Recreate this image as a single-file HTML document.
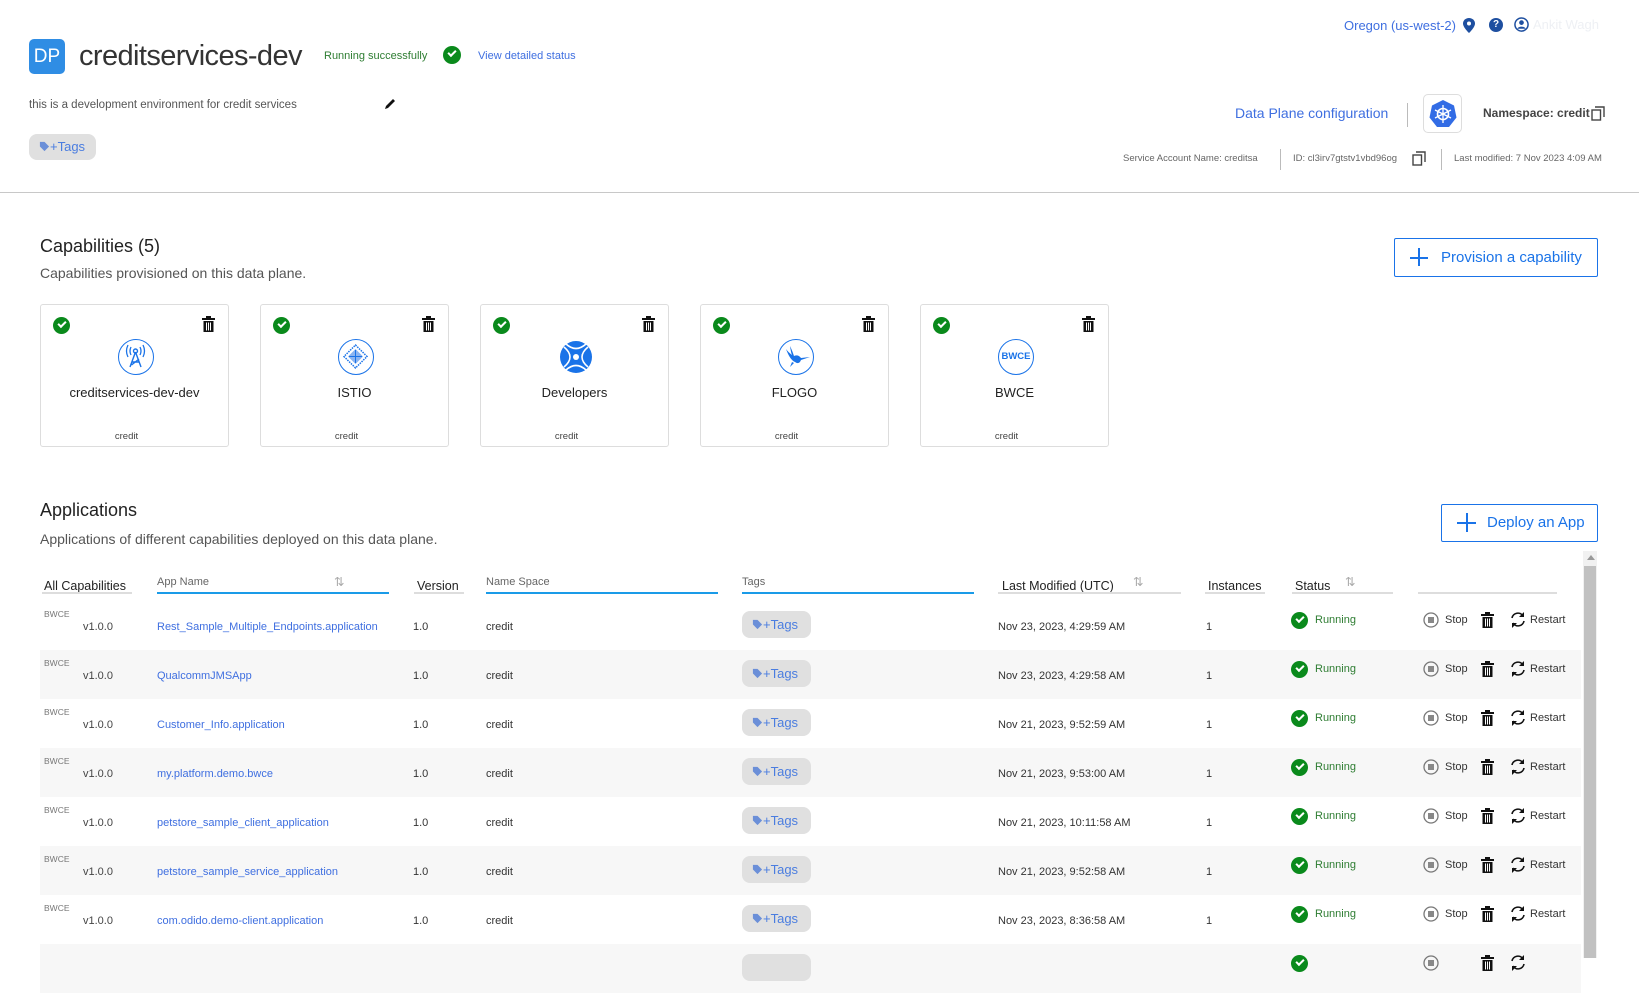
<!DOCTYPE html>
<html><head><meta charset="utf-8"><style>
*{box-sizing:border-box;margin:0;padding:0}
body{width:1639px;height:958px;overflow:hidden;background:#fff;font-family:"Liberation Sans",sans-serif;color:#333;position:relative}
.a{position:absolute;white-space:nowrap}
.blue{color:#1a73e8}
.chk{position:absolute;width:17px;height:17px;border-radius:50%;background:#0a8a1c}
.chk:after{content:"";position:absolute;left:5px;top:4px;width:6px;height:3px;border-left:2px solid #fff;border-bottom:2px solid #fff;transform:rotate(-45deg)}
.card{position:absolute;top:304px;width:189px;height:143px;border:1px solid #ddd;border-radius:3px;background:#fff}
.card .chk{left:12px;top:12px}
.card .tr{position:absolute;left:161px;top:11px}
.card .ic{position:absolute;left:77px;top:34px;width:36px;height:36px;border-radius:50%;border:1.5px solid #1a73e8}
.card .nm{position:absolute;left:0;width:100%;top:80px;text-align:center;font-size:13px;color:#222}
.card .ns{position:absolute;left:-8px;width:100%;top:126px;text-align:center;font-size:9.5px;color:#444}
.pill{position:absolute;background:#e0e0e0;border-radius:8px;color:#4a7de0;font-size:13px}
.hd{position:absolute;top:577px;font-size:12.5px;color:#222}
.ul{position:absolute;top:592px;height:2px;background:#ddd}
.ulb{background:#1a9be8}
.row{position:absolute;left:40px;width:1541px;height:49px}
.row.g{background:#f7f7f7}
.row .a{font-size:11px}
</style></head><body>
<!-- header -->
<div class="a" style="left:29px;top:39px;width:36px;height:35px;background:#2f8de4;border-radius:5px;color:#fff;font-size:19px;line-height:35px;text-align:center">DP</div>
<div class="a" style="left:79px;top:40px;font-size:29px;color:#333;letter-spacing:-0.6px">creditservices-dev</div>
<div class="a" style="left:324px;top:50px;font-size:11px;color:#2e7d32">Running successfully</div>
<div class="chk" style="left:443px;top:46px;width:18px;height:18px"></div>
<div class="a blue" style="left:478px;top:50px;font-size:11px;color:#3f6fe0">View detailed status</div>
<div class="a" style="left:29px;top:99px;font-size:11.5px;color:#555">this is a development environment for credit services</div>
<svg class="a" style="left:383px;top:97px" width="14" height="14" viewBox="0 0 14 14"><path d="M2 12 L3 9 L10 2 L12 4 L5 11 Z" fill="#111"/></svg>
<div class="pill" style="left:29px;top:134px;width:67px;height:26px;line-height:26px;padding-left:10px;font-size:13px">
<svg width="11" height="11" viewBox="0 0 12 12" style="vertical-align:-1px"><path d="M1 1 H6 L11 6 L6 11 L1 6 Z" fill="#6b8fd8"/></svg>+Tags</div>

<div class="a" style="left:1344px;top:18px;font-size:13px;color:#3f6fe0">Oregon (us-west-2)</div>
<svg class="a" style="left:1463px;top:18px" width="12" height="15" viewBox="0 0 12 15"><path d="M6 0 C2.5 0 0 2.5 0 5.5 C0 9.5 6 15 6 15 C6 15 12 9.5 12 5.5 C12 2.5 9.5 0 6 0 Z" fill="#1e4fa0"/><circle cx="6" cy="5.5" r="2" fill="#fff"/></svg>
<div class="a" style="left:1489px;top:18px;width:14px;height:14px;border-radius:50%;background:#1e4fa0;color:#fff;font-size:10px;font-weight:bold;text-align:center;line-height:14px">?</div>
<svg class="a" style="left:1514px;top:17px" width="15" height="15" viewBox="0 0 16 16"><circle cx="8" cy="8" r="7" fill="none" stroke="#1e4fa0" stroke-width="1.6"/><circle cx="8" cy="6" r="2.5" fill="#1e4fa0"/><path d="M3.5 12.5 C5 9.5 11 9.5 12.5 12.5" fill="#1e4fa0"/></svg>
<div class="a" style="left:1533px;top:17px;font-size:13px;color:#eef0f4">Ankit Wagh</div>

<div class="a" style="left:1235px;top:105px;font-size:14px;color:#3f6fe0">Data Plane configuration</div>
<div class="a" style="left:1407px;top:103px;width:1px;height:24px;background:#bbb"></div>
<div class="a" style="left:1423px;top:94px;width:39px;height:39px;border:1px solid #ddd;border-radius:5px"></div>
<svg class="a" style="left:1429px;top:99px" width="28" height="28" viewBox="0 0 28 28"><path d="M14 1 L25 6.5 L27.5 18.5 L20 28 H8 L0.5 18.5 L3 6.5 Z" fill="#326ce5"/><circle cx="14" cy="15" r="5.5" fill="none" stroke="#fff" stroke-width="1.6"/><path d="M14 6 V24 M6 11 L22 19 M22 11 L6 19" stroke="#fff" stroke-width="1.3"/></svg>
<div class="a" style="left:1483px;top:106px;font-size:12px;color:#444;font-weight:bold">Namespace: credit</div>
<svg class="a" style="left:1591px;top:106px" width="14" height="15" viewBox="0 0 14 15"><rect x="1" y="4" width="8.5" height="10" fill="none" stroke="#444" stroke-width="1.4"/><path d="M4 1 H13 V11" fill="none" stroke="#444" stroke-width="1.4"/></svg>

<div class="a" style="left:1123px;top:153px;font-size:9.5px;color:#666">Service Account Name: creditsa</div>
<div class="a" style="left:1280px;top:149px;width:1px;height:21px;background:#bbb"></div>
<div class="a" style="left:1293px;top:153px;font-size:9.5px;color:#666">ID: cl3irv7gtstv1vbd96og</div>
<svg class="a" style="left:1412px;top:151px" width="14" height="15" viewBox="0 0 14 15"><rect x="1" y="4" width="8.5" height="10" fill="none" stroke="#444" stroke-width="1.4"/><path d="M4 1 H13 V11" fill="none" stroke="#444" stroke-width="1.4"/></svg>
<div class="a" style="left:1441px;top:149px;width:1px;height:21px;background:#bbb"></div>
<div class="a" style="left:1454px;top:153px;font-size:9.5px;color:#666">Last modified: 7 Nov 2023 4:09 AM</div>

<div class="a" style="left:0;top:192px;width:1639px;height:1px;background:#c8c8c8"></div>

<!-- capabilities -->
<div class="a" style="left:40px;top:236px;font-size:18px;color:#222">Capabilities (5)</div>
<div class="a" style="left:40px;top:265px;font-size:14px;color:#555">Capabilities provisioned on this data plane.</div>
<div class="a" style="left:1394px;top:238px;width:204px;height:39px;border:1px solid #1a73e8;border-radius:2px;color:#1a73e8;font-size:15px;line-height:37px;padding-left:46px">Provision a capability</div>
<div class="a" style="left:1410px;top:257px;width:18px;height:2px;background:#1a73e8"></div>
<div class="a" style="left:1418px;top:248px;width:2px;height:18px;background:#1a73e8"></div>

<svg width="0" height="0" style="position:absolute"><defs><g id="tr"><rect x="0" y="2" width="13" height="2" fill="#111"/><rect x="4" y="0" width="5" height="2" fill="#111"/><path d="M1.5 5 H11.5 V16 H1.5 Z" fill="#111"/><path d="M4.5 6.5 V14.5 M6.5 6.5 V14.5 M8.5 6.5 V14.5" stroke="#fff" stroke-width="1"/></g></defs></svg>

<div class="card" style="left:40px"><div class="chk"></div><svg class="tr" width="13" height="16"><use href="#tr"/></svg>
<div class="ic"><svg width="33" height="33" viewBox="0 0 33 33"><path d="M16.5 12 L11 27 M16.5 12 L22 27 M13 22 H20 M12.5 25 L20 19" stroke="#1a73e8" stroke-width="1.4" fill="none"/><circle cx="16.5" cy="11" r="2" fill="none" stroke="#1a73e8" stroke-width="1.4"/><path d="M12 7 Q10 11 12 15 M21 7 Q23 11 21 15 M9 5 Q6 11 9 17 M24 5 Q27 11 24 17" stroke="#1a73e8" stroke-width="1.3" fill="none"/></svg></div>
<div class="nm">creditservices-dev-dev</div><div class="ns">credit</div></div>

<div class="card" style="left:260px"><div class="chk"></div><svg class="tr" width="13" height="16"><use href="#tr"/></svg>
<div class="ic"><svg width="33" height="33" viewBox="0 0 33 33"><path d="M16.5 5 L28 16.5 L16.5 28 L5 16.5 Z" fill="none" stroke="#1a73e8" stroke-width="1.5" stroke-dasharray="1.5 1"/><path d="M16.5 9 L24 16.5 L16.5 24 L9 16.5 Z" fill="#8bb4f0"/><path d="M10 16.5 H23 M16.5 10 V23" stroke="#1a73e8" stroke-width="1"/></svg></div>
<div class="nm">ISTIO</div><div class="ns">credit</div></div>

<div class="card" style="left:480px"><div class="chk"></div><svg class="tr" width="13" height="16"><use href="#tr"/></svg>
<div class="ic" style="border:none"><svg width="36" height="36" viewBox="0 0 36 36"><circle cx="18" cy="18" r="16" fill="#1a73e8"/><path d="M6 8 Q18 18 6 28 M30 8 Q18 18 30 28 M8 5 Q18 14 28 5 M8 31 Q18 22 28 31" stroke="#fff" stroke-width="1.6" fill="none"/><circle cx="18" cy="18" r="3" fill="#fff"/></svg></div>
<div class="nm">Developers</div><div class="ns">credit</div></div>

<div class="card" style="left:700px"><div class="chk"></div><svg class="tr" width="13" height="16"><use href="#tr"/></svg>
<div class="ic"><svg width="33" height="33" viewBox="0 0 33 33"><path d="M7 9 Q11 20 16 22 Q20 25 22 20 L31 17 L22 18 Q19 14 15 16 Q13 10 11 6 Q12 13 13 15 Q9 12 7 9 Z" fill="#1a73e8"/><path d="M13 22 L11 27 L15 23" fill="#1a73e8"/></svg></div>
<div class="nm">FLOGO</div><div class="ns">credit</div></div>

<div class="card" style="left:920px"><div class="chk"></div><svg class="tr" width="13" height="16"><use href="#tr"/></svg>
<div class="ic" style="font-size:9.5px;color:#1a73e8;text-align:center;line-height:33px;font-weight:bold">BWCE</div>
<div class="nm">BWCE</div><div class="ns">credit</div></div>

<!-- applications -->
<div class="a" style="left:40px;top:500px;font-size:18px;color:#222">Applications</div>
<div class="a" style="left:40px;top:531px;font-size:14px;color:#555">Applications of different capabilities deployed on this data plane.</div>
<div class="a" style="left:1441px;top:504px;width:157px;height:38px;border:1px solid #1a73e8;border-radius:2px;color:#1a73e8;font-size:15px;line-height:36px;padding-left:45px">Deploy an App</div>
<div class="a" style="left:1457px;top:522px;width:19px;height:2px;background:#1a73e8"></div>
<div class="a" style="left:1466px;top:513px;width:2px;height:19px;background:#1a73e8"></div>

<div class="hd" style="left:44px;top:579px">All Capabilities</div><div class="ul" style="left:42px;width:90px"></div>
<div class="hd" style="left:157px;top:576px;font-size:11px;color:#666">App Name</div><div class="ul ulb" style="left:157px;width:232px"></div>
<div class="hd" style="left:334px;top:574px;color:#aaa">⇅</div>
<div class="hd" style="left:417px;top:579px">Version</div><div class="ul" style="left:414px;width:50px"></div>
<div class="hd" style="left:486px;top:576px;font-size:11px;color:#666">Name Space</div><div class="ul ulb" style="left:486px;width:232px"></div>
<div class="hd" style="left:742px;top:576px;font-size:11px;color:#666">Tags</div><div class="ul ulb" style="left:742px;width:232px"></div>
<div class="hd" style="left:1002px;top:579px">Last Modified (UTC)</div><div class="ul" style="left:998px;width:183px"></div>
<div class="hd" style="left:1133px;top:574px;color:#aaa">⇅</div>
<div class="hd" style="left:1208px;top:579px">Instances</div><div class="ul" style="left:1205px;width:60px"></div>
<div class="hd" style="left:1295px;top:579px">Status</div><div class="ul" style="left:1292px;width:101px"></div>
<div class="hd" style="left:1345px;top:574px;color:#aaa">⇅</div>
<div class="ul" style="left:1418px;width:139px"></div>

<svg width="0" height="0" style="position:absolute"><defs>
<g id="st"><circle cx="8" cy="8" r="7" fill="none" stroke="#777" stroke-width="1.3"/><rect x="5" y="5" width="6" height="6" fill="#888"/></g>
<g id="rs"><path d="M3 7 A6 6 0 0 1 14 5" fill="none" stroke="#111" stroke-width="1.6"/><path d="M15 1 V6 H10" fill="#111"/><path d="M15 10 A6 6 0 0 1 4 12" fill="none" stroke="#111" stroke-width="1.6"/><path d="M3 17 V12 H8" fill="#111"/></g>
</defs></svg>

<div class="row" style="top:601px">
<div class="a" style="left:4px;top:8px;font-size:8.5px;color:#777">BWCE</div><div class="a" style="left:43px;top:20px;color:#444">v1.0.0</div>
<div class="a" style="left:117px;top:20px;color:#3f6fe0">Rest_Sample_Multiple_Endpoints.application</div>
<div class="a" style="left:373px;top:20px">1.0</div><div class="a" style="left:446px;top:20px">credit</div>
<div class="pill" style="left:702px;top:10px;width:69px;height:27px;line-height:27px;padding-left:10px"><svg width="11" height="11" viewBox="0 0 12 12" style="vertical-align:-1px"><path d="M1 1 H6 L11 6 L6 11 L1 6 Z" fill="#6b8fd8"/></svg>+Tags</div>
<div class="a" style="left:958px;top:20px">Nov 23, 2023, 4:29:59 AM</div><div class="a" style="left:1166px;top:20px">1</div>
<div class="chk" style="left:1251px;top:11px"></div><div class="a" style="left:1275px;top:13px;color:#2e7d32">Running</div>
<svg class="a" style="left:1383px;top:11px" width="17" height="17"><use href="#st"/></svg><div class="a" style="left:1405px;top:13px">Stop</div>
<svg class="a" style="left:1441px;top:11px" width="13" height="16"><use href="#tr"/></svg>
<svg class="a" style="left:1469px;top:10px" width="18" height="18"><use href="#rs"/></svg><div class="a" style="left:1490px;top:13px">Restart</div>
</div>
<div class="row g" style="top:650px">
<div class="a" style="left:4px;top:8px;font-size:8.5px;color:#777">BWCE</div><div class="a" style="left:43px;top:20px;color:#444">v1.0.0</div>
<div class="a" style="left:117px;top:20px;color:#3f6fe0">QualcommJMSApp</div>
<div class="a" style="left:373px;top:20px">1.0</div><div class="a" style="left:446px;top:20px">credit</div>
<div class="pill" style="left:702px;top:10px;width:69px;height:27px;line-height:27px;padding-left:10px"><svg width="11" height="11" viewBox="0 0 12 12" style="vertical-align:-1px"><path d="M1 1 H6 L11 6 L6 11 L1 6 Z" fill="#6b8fd8"/></svg>+Tags</div>
<div class="a" style="left:958px;top:20px">Nov 23, 2023, 4:29:58 AM</div><div class="a" style="left:1166px;top:20px">1</div>
<div class="chk" style="left:1251px;top:11px"></div><div class="a" style="left:1275px;top:13px;color:#2e7d32">Running</div>
<svg class="a" style="left:1383px;top:11px" width="17" height="17"><use href="#st"/></svg><div class="a" style="left:1405px;top:13px">Stop</div>
<svg class="a" style="left:1441px;top:11px" width="13" height="16"><use href="#tr"/></svg>
<svg class="a" style="left:1469px;top:10px" width="18" height="18"><use href="#rs"/></svg><div class="a" style="left:1490px;top:13px">Restart</div>
</div>
<div class="row" style="top:699px">
<div class="a" style="left:4px;top:8px;font-size:8.5px;color:#777">BWCE</div><div class="a" style="left:43px;top:20px;color:#444">v1.0.0</div>
<div class="a" style="left:117px;top:20px;color:#3f6fe0">Customer_Info.application</div>
<div class="a" style="left:373px;top:20px">1.0</div><div class="a" style="left:446px;top:20px">credit</div>
<div class="pill" style="left:702px;top:10px;width:69px;height:27px;line-height:27px;padding-left:10px"><svg width="11" height="11" viewBox="0 0 12 12" style="vertical-align:-1px"><path d="M1 1 H6 L11 6 L6 11 L1 6 Z" fill="#6b8fd8"/></svg>+Tags</div>
<div class="a" style="left:958px;top:20px">Nov 21, 2023, 9:52:59 AM</div><div class="a" style="left:1166px;top:20px">1</div>
<div class="chk" style="left:1251px;top:11px"></div><div class="a" style="left:1275px;top:13px;color:#2e7d32">Running</div>
<svg class="a" style="left:1383px;top:11px" width="17" height="17"><use href="#st"/></svg><div class="a" style="left:1405px;top:13px">Stop</div>
<svg class="a" style="left:1441px;top:11px" width="13" height="16"><use href="#tr"/></svg>
<svg class="a" style="left:1469px;top:10px" width="18" height="18"><use href="#rs"/></svg><div class="a" style="left:1490px;top:13px">Restart</div>
</div>
<div class="row g" style="top:748px">
<div class="a" style="left:4px;top:8px;font-size:8.5px;color:#777">BWCE</div><div class="a" style="left:43px;top:20px;color:#444">v1.0.0</div>
<div class="a" style="left:117px;top:20px;color:#3f6fe0">my.platform.demo.bwce</div>
<div class="a" style="left:373px;top:20px">1.0</div><div class="a" style="left:446px;top:20px">credit</div>
<div class="pill" style="left:702px;top:10px;width:69px;height:27px;line-height:27px;padding-left:10px"><svg width="11" height="11" viewBox="0 0 12 12" style="vertical-align:-1px"><path d="M1 1 H6 L11 6 L6 11 L1 6 Z" fill="#6b8fd8"/></svg>+Tags</div>
<div class="a" style="left:958px;top:20px">Nov 21, 2023, 9:53:00 AM</div><div class="a" style="left:1166px;top:20px">1</div>
<div class="chk" style="left:1251px;top:11px"></div><div class="a" style="left:1275px;top:13px;color:#2e7d32">Running</div>
<svg class="a" style="left:1383px;top:11px" width="17" height="17"><use href="#st"/></svg><div class="a" style="left:1405px;top:13px">Stop</div>
<svg class="a" style="left:1441px;top:11px" width="13" height="16"><use href="#tr"/></svg>
<svg class="a" style="left:1469px;top:10px" width="18" height="18"><use href="#rs"/></svg><div class="a" style="left:1490px;top:13px">Restart</div>
</div>
<div class="row" style="top:797px">
<div class="a" style="left:4px;top:8px;font-size:8.5px;color:#777">BWCE</div><div class="a" style="left:43px;top:20px;color:#444">v1.0.0</div>
<div class="a" style="left:117px;top:20px;color:#3f6fe0">petstore_sample_client_application</div>
<div class="a" style="left:373px;top:20px">1.0</div><div class="a" style="left:446px;top:20px">credit</div>
<div class="pill" style="left:702px;top:10px;width:69px;height:27px;line-height:27px;padding-left:10px"><svg width="11" height="11" viewBox="0 0 12 12" style="vertical-align:-1px"><path d="M1 1 H6 L11 6 L6 11 L1 6 Z" fill="#6b8fd8"/></svg>+Tags</div>
<div class="a" style="left:958px;top:20px">Nov 21, 2023, 10:11:58 AM</div><div class="a" style="left:1166px;top:20px">1</div>
<div class="chk" style="left:1251px;top:11px"></div><div class="a" style="left:1275px;top:13px;color:#2e7d32">Running</div>
<svg class="a" style="left:1383px;top:11px" width="17" height="17"><use href="#st"/></svg><div class="a" style="left:1405px;top:13px">Stop</div>
<svg class="a" style="left:1441px;top:11px" width="13" height="16"><use href="#tr"/></svg>
<svg class="a" style="left:1469px;top:10px" width="18" height="18"><use href="#rs"/></svg><div class="a" style="left:1490px;top:13px">Restart</div>
</div>
<div class="row g" style="top:846px">
<div class="a" style="left:4px;top:8px;font-size:8.5px;color:#777">BWCE</div><div class="a" style="left:43px;top:20px;color:#444">v1.0.0</div>
<div class="a" style="left:117px;top:20px;color:#3f6fe0">petstore_sample_service_application</div>
<div class="a" style="left:373px;top:20px">1.0</div><div class="a" style="left:446px;top:20px">credit</div>
<div class="pill" style="left:702px;top:10px;width:69px;height:27px;line-height:27px;padding-left:10px"><svg width="11" height="11" viewBox="0 0 12 12" style="vertical-align:-1px"><path d="M1 1 H6 L11 6 L6 11 L1 6 Z" fill="#6b8fd8"/></svg>+Tags</div>
<div class="a" style="left:958px;top:20px">Nov 21, 2023, 9:52:58 AM</div><div class="a" style="left:1166px;top:20px">1</div>
<div class="chk" style="left:1251px;top:11px"></div><div class="a" style="left:1275px;top:13px;color:#2e7d32">Running</div>
<svg class="a" style="left:1383px;top:11px" width="17" height="17"><use href="#st"/></svg><div class="a" style="left:1405px;top:13px">Stop</div>
<svg class="a" style="left:1441px;top:11px" width="13" height="16"><use href="#tr"/></svg>
<svg class="a" style="left:1469px;top:10px" width="18" height="18"><use href="#rs"/></svg><div class="a" style="left:1490px;top:13px">Restart</div>
</div>
<div class="row" style="top:895px">
<div class="a" style="left:4px;top:8px;font-size:8.5px;color:#777">BWCE</div><div class="a" style="left:43px;top:20px;color:#444">v1.0.0</div>
<div class="a" style="left:117px;top:20px;color:#3f6fe0">com.odido.demo-client.application</div>
<div class="a" style="left:373px;top:20px">1.0</div><div class="a" style="left:446px;top:20px">credit</div>
<div class="pill" style="left:702px;top:10px;width:69px;height:27px;line-height:27px;padding-left:10px"><svg width="11" height="11" viewBox="0 0 12 12" style="vertical-align:-1px"><path d="M1 1 H6 L11 6 L6 11 L1 6 Z" fill="#6b8fd8"/></svg>+Tags</div>
<div class="a" style="left:958px;top:20px">Nov 23, 2023, 8:36:58 AM</div><div class="a" style="left:1166px;top:20px">1</div>
<div class="chk" style="left:1251px;top:11px"></div><div class="a" style="left:1275px;top:13px;color:#2e7d32">Running</div>
<svg class="a" style="left:1383px;top:11px" width="17" height="17"><use href="#st"/></svg><div class="a" style="left:1405px;top:13px">Stop</div>
<svg class="a" style="left:1441px;top:11px" width="13" height="16"><use href="#tr"/></svg>
<svg class="a" style="left:1469px;top:10px" width="18" height="18"><use href="#rs"/></svg><div class="a" style="left:1490px;top:13px">Restart</div>
</div>
<div class="row g" style="top:944px">
<div class="pill" style="left:702px;top:10px;width:69px;height:27px"></div>
<div class="chk" style="left:1251px;top:11px"></div>
<svg class="a" style="left:1383px;top:11px" width="17" height="17"><use href="#st"/></svg>
<svg class="a" style="left:1441px;top:11px" width="13" height="16"><use href="#tr"/></svg>
<svg class="a" style="left:1469px;top:10px" width="18" height="18"><use href="#rs"/></svg>
</div>

<!-- scrollbar -->
<div class="a" style="left:1583px;top:551px;width:14px;height:407px;background:#f1f1f1"></div>
<div class="a" style="left:1584px;top:566px;width:12px;height:392px;background:#c1c1c1"></div>
<div class="a" style="left:1587px;top:555px;width:0;height:0;border-left:4px solid transparent;border-right:4px solid transparent;border-bottom:5px solid #999"></div>
</body></html>
